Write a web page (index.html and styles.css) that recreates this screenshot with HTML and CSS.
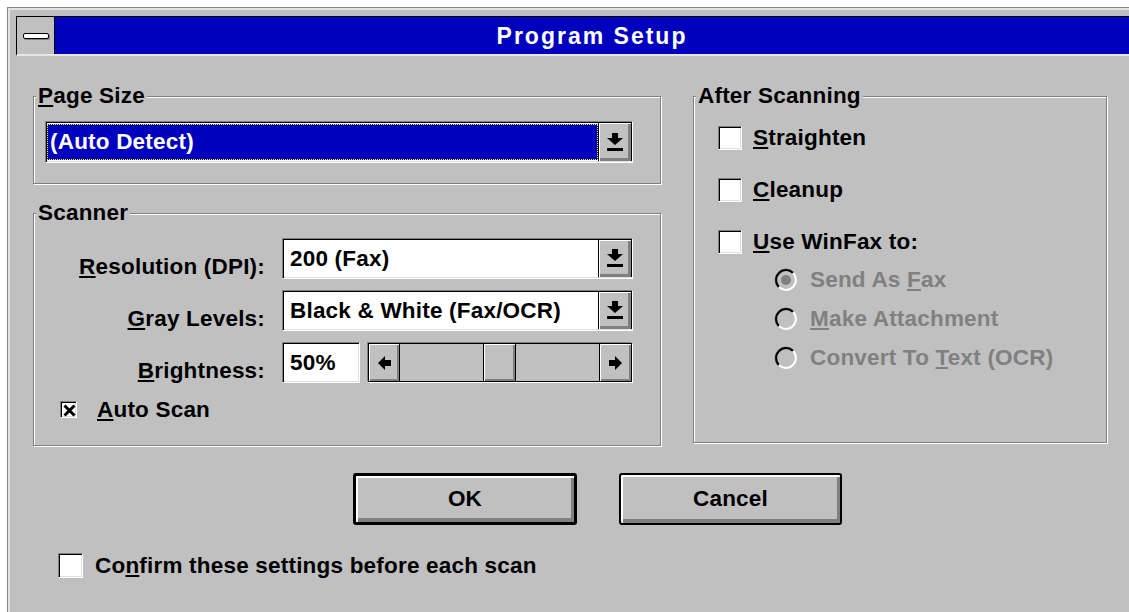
FILE: index.html
```html
<!DOCTYPE html>
<html lang="en">
<head>
<meta charset="utf-8">
<title>Program Setup</title>
<link rel="stylesheet" href="styles.css">
</head>
<body>
<div class="window">
  <div class="titlebar">
    <div class="sysmenu"><span class="sysbar"></span></div>
    <div class="caption">Program Setup</div>
  </div>

  <div class="client">
    <div class="top">
      <div class="left-col">
        <div class="group page-size">
          <span class="legend"><u>P</u>age Size</span>
          <div class="combo combo-wide">
            <div class="field selected"><span>(Auto Detect)</span></div>
            <div class="drop-btn">
              <svg width="16" height="18" viewBox="0 0 16 18"><path d="M5 0h6v5h5l-8 7-8-7h5z M0 15h16v3H0z"/></svg>
            </div>
          </div>
        </div>

        <div class="group scanner">
          <span class="legend">Scanner</span>
          <div class="scanner-grid">
            <span class="field-label"><u>R</u>esolution (DPI):</span>
            <div class="combo">
              <div class="field">200 (Fax)</div>
              <div class="drop-btn">
                <svg width="16" height="18" viewBox="0 0 16 18"><path d="M5 0h6v5h5l-8 7-8-7h5z M0 15h16v3H0z"/></svg>
              </div>
            </div>

            <span class="field-label"><u>G</u>ray Levels:</span>
            <div class="combo">
              <div class="field">Black &amp; White (Fax/OCR)</div>
              <div class="drop-btn">
                <svg width="16" height="18" viewBox="0 0 16 18"><path d="M5 0h6v5h5l-8 7-8-7h5z M0 15h16v3H0z"/></svg>
              </div>
            </div>

            <span class="field-label"><u>B</u>rightness:</span>
            <div class="slider-row">
              <div class="edit">50%</div>
              <div class="scrollbar">
                <div class="sb-btn">
                  <svg width="13" height="14" viewBox="0 0 13 14"><path d="M0 7 7 0v4h6v6H7v4z"/></svg>
                </div>
                <div class="sb-track"><span class="sb-thumb"></span></div>
                <div class="sb-btn sb-right">
                  <svg width="13" height="14" viewBox="0 0 13 14"><path d="M13 7 6 0v4H0v6h6v4z"/></svg>
                </div>
              </div>
            </div>
          </div>

          <div class="autoscan">
            <span class="cb cb-small">
              <svg width="13" height="13" viewBox="0 0 13 13"><path d="M1.5 1.5l10 10M11.5 1.5l-10 10" stroke="#000" stroke-width="3"/></svg>
            </span>
            <span><u>A</u>uto Scan</span>
          </div>
        </div>
      </div>

      <div class="group after">
        <span class="legend">After Scanning</span>
        <div class="opt-list">
          <div class="opt"><span class="cb"></span><span><u>S</u>traighten</span></div>
          <div class="opt"><span class="cb"></span><span><u>C</u>leanup</span></div>
          <div class="opt"><span class="cb"></span><span><u>U</u>se WinFax to:</span></div>
        </div>
        <div class="radio-list">
          <div class="radio">
            <svg width="24" height="24" viewBox="0 0 24 24">
              <path d="M19.78 4.22A11 11 0 0 0 4.22 19.78" fill="none" stroke="#808080" stroke-width="1"/>
              <path d="M19.07 4.93A10 10 0 0 0 4.93 19.07" fill="none" stroke="#000" stroke-width="2"/>
              <path d="M4.93 19.07A10 10 0 0 0 19.07 4.93" fill="none" stroke="#fff" stroke-width="2"/>
              <circle cx="12" cy="12" r="5" fill="#808080"/>
            </svg>
            <span>Send As <u>F</u>ax</span>
          </div>
          <div class="radio">
            <svg width="24" height="24" viewBox="0 0 24 24">
              <path d="M19.78 4.22A11 11 0 0 0 4.22 19.78" fill="none" stroke="#808080" stroke-width="1"/>
              <path d="M19.07 4.93A10 10 0 0 0 4.93 19.07" fill="none" stroke="#000" stroke-width="2"/>
              <path d="M4.93 19.07A10 10 0 0 0 19.07 4.93" fill="none" stroke="#fff" stroke-width="2"/>
            </svg>
            <span><u>M</u>ake Attachment</span>
          </div>
          <div class="radio">
            <svg width="24" height="24" viewBox="0 0 24 24">
              <path d="M19.78 4.22A11 11 0 0 0 4.22 19.78" fill="none" stroke="#808080" stroke-width="1"/>
              <path d="M19.07 4.93A10 10 0 0 0 4.93 19.07" fill="none" stroke="#000" stroke-width="2"/>
              <path d="M4.93 19.07A10 10 0 0 0 19.07 4.93" fill="none" stroke="#fff" stroke-width="2"/>
            </svg>
            <span>Convert To <u>T</u>ext (OCR)</span>
          </div>
        </div>
      </div>
    </div>

    <div class="buttons">
      <div class="btn btn-default">OK</div>
      <div class="btn">Cancel</div>
    </div>

    <div class="confirm">
      <span class="cb cb-large"></span>
      <span>Co<u>n</u>firm these settings before each scan</span>
    </div>
  </div>
</div>
</body>
</html>
```

FILE: styles.css
```css
html, body {
  margin: 0;
  height: 100%;
}

body {
  background: #fff;
  overflow: hidden;
  font: bold 22.5px/24px "Liberation Sans", Arial, sans-serif;
  letter-spacing: 0.2px;
  color: #000;
}

u {
  text-decoration-thickness: 2px;
  text-underline-offset: 2px;
}

/* dialog frame */
.window {
  margin: 7px 0 0 7px;
  height: calc(100% - 7px);
  box-sizing: border-box;
  border-top: 1px solid #868686;
  border-left: 1px solid #868686;
  background: #c0c0c0;
  box-shadow: inset 2px 2px 0 #e3e3e3;
}

.titlebar {
  display: flex;
  margin: 8px 0 0 8px;
  height: 37px;
  border-top: 1px solid #000;
  border-left: 1px solid #000;
  border-bottom: 2px solid #e6e6e6;
}

.sysmenu {
  flex: none;
  width: 37px;
  border-right: 1px solid #000;
  background: #c0c0c0;
  display: flex;
  align-items: center;
  justify-content: center;
}

.sysbar {
  width: 24px;
  height: 4px;
  border: 1.5px solid #000;
  border-radius: 2px;
  background: #fff;
  box-shadow: 1px 1px 0 #808080;
}

.caption {
  flex: 1;
  background: #0000bf;
  color: #fff;
  text-align: center;
  font-size: 23px;
  letter-spacing: 2px;
  line-height: 37px;
  padding-top: 1px;
}

/* client area */
.client {
  padding: 40px 0 0 25px;
}

.top {
  display: flex;
  gap: 32px;
  align-items: flex-start;
}

.left-col {
  width: 628px;
  display: flex;
  flex-direction: column;
  gap: 29px;
}

.group {
  position: relative;
  box-sizing: border-box;
  border: 1px solid #808080;
  box-shadow: 1px 1px 0 #fff, inset 1px 1px 0 #fff;
}

.legend {
  position: absolute;
  top: -13px;
  left: 2px;
  padding: 0 2px;
  background: #c0c0c0;
  white-space: nowrap;
}

.page-size {
  height: 88px;
  padding: 24px 0 0 11px;
}

.scanner {
  height: 233px;
  padding-top: 24px;
}

.after {
  width: 414px;
  height: 347px;
  padding: 29px 0 0 24px;
}

/* combo boxes and edits */
.combo {
  display: flex;
  height: 41px;
  box-sizing: border-box;
  border: 1px solid;
  border-color: #808080 #fff #fff #808080;
  box-shadow: inset 1px 1px 0 #000, inset -1px -1px 0 #dfdfdf;
  background: #fff;
}

.combo-wide {
  width: 588px;
  height: 42px;
}

.field {
  flex: 1;
  display: flex;
  align-items: center;
  padding-left: 7px;
  white-space: nowrap;
}

.field.selected {
  margin: 2px 0 2px 1px;
  padding-left: 2px;
  background: #0000bf;
  color: #fff;
  border: 1px dotted #ffff00;
}

.drop-btn {
  flex: none;
  width: 32px;
  margin: 1px 0;
  border-left: 1px solid #000;
  border-right: 1px solid #000;
  background: #c0c0c0;
  box-shadow: inset 1px 1px 0 #fff, inset -3px -3px 0 #808080;
  display: flex;
  align-items: center;
  justify-content: center;
  padding-bottom: 1px;
}

.scanner-grid {
  display: grid;
  grid-template-columns: 231px 351px;
  grid-auto-rows: 41px;
  column-gap: 17px;
  row-gap: 11px;
}

.field-label {
  align-self: end;
  text-align: right;
  white-space: nowrap;
}

.slider-row {
  display: flex;
  align-items: center;
  gap: 8px;
}

.edit {
  width: 78px;
  height: 41px;
  box-sizing: border-box;
  border: 1px solid;
  border-color: #808080 #fff #fff #808080;
  box-shadow: inset 1px 1px 0 #000, inset -1px -1px 0 #dfdfdf;
  background: #fff;
  padding-left: 7px;
  display: flex;
  align-items: center;
}

/* brightness scroll bar */
.scrollbar {
  display: flex;
  width: 264px;
  height: 39px;
  box-sizing: border-box;
  border: 1px solid #000;
  box-shadow: -1px -1px 0 #808080, 1px 1px 0 #fff;
}

.sb-btn {
  flex: none;
  width: 30px;
  border-right: 1px solid #000;
  background: #c0c0c0;
  box-shadow: inset 1px 1px 0 #fff, inset -2px -2px 0 #808080;
  display: flex;
  align-items: center;
  justify-content: center;
}

.sb-btn.sb-right {
  width: 31px;
  border-right: 0;
  border-left: 1px solid #000;
}

.sb-track {
  flex: 1;
  display: flex;
  justify-content: center;
  background: #c0c0c0;
}

.sb-thumb {
  width: 31px;
  border-left: 1px solid #000;
  border-right: 1px solid #000;
  background: #c0c0c0;
  box-shadow: inset 1px 1px 0 #fff, inset -2px -2px 0 #808080;
}

/* check boxes */
.cb {
  flex: none;
  width: 24px;
  height: 24px;
  box-sizing: border-box;
  border: 1px solid;
  border-color: #808080 #fff #fff #808080;
  box-shadow: inset 1px 1px 0 #000, inset -1px -1px 0 #dfdfdf;
  background: #fff;
  display: flex;
  align-items: center;
  justify-content: center;
}

.cb-small {
  width: 17px;
  height: 17px;
  padding: 1px 0 0 1px;
}

.cb-large {
  width: 25px;
  height: 25px;
}

.autoscan {
  display: flex;
  align-items: center;
  gap: 20px;
  height: 17px;
  margin: 18px 0 0 26px;
}

.opt-list {
  display: flex;
  flex-direction: column;
  gap: 28px;
}

.opt {
  display: flex;
  align-items: center;
  gap: 11px;
  height: 24px;
}

.radio-list {
  display: flex;
  flex-direction: column;
  gap: 15px;
  margin: 14px 0 0 56px;
  color: #808080;
}

.radio {
  display: flex;
  align-items: center;
  gap: 12px;
  height: 24px;
  white-space: nowrap;
}

.radio svg {
  flex: none;
}

/* push buttons */
.buttons {
  display: flex;
  gap: 42px;
  margin: 27px 0 0 320px;
}

.btn {
  width: 223px;
  height: 52px;
  box-sizing: border-box;
  border: 2px solid #000;
  border-radius: 3px;
  background: #c0c0c0;
  box-shadow: inset 2px 2px 0 #fff, inset -3px -4px 0 #808080;
  display: flex;
  align-items: center;
  justify-content: center;
}

.btn-default {
  width: 224px;
  border-width: 3px;
}

.confirm {
  display: flex;
  align-items: center;
  gap: 12px;
  height: 25px;
  margin: 28px 0 0 25px;
}
```
